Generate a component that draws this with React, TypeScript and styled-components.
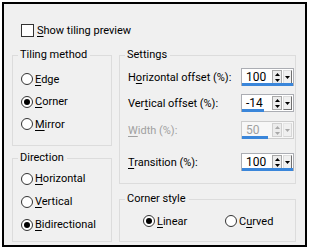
import React from "react";
import styled, { createGlobalStyle } from "styled-components";

const Global = createGlobalStyle`
  html, body { margin: 0; padding: 0; background: #ffffff; }
  body { font-family: Roboto, "Segoe UI", Tahoma, sans-serif; font-size: 11px; color: #000; }
`;

const Page = styled.div`
  width: 313px;
  height: 251px;
  background: #fff;
  padding: 2px 0 0 2px;
  box-sizing: border-box;
`;

const Frame = styled.div`
  width: 305px;
  height: 245px;
  box-sizing: border-box;
  border: 2px solid #000;
  background: #f0f0f0;
  padding: 20px 0 0 8px;
  display: flex;
  flex-direction: column;
`;

const CheckRow = styled.label`
  display: flex;
  align-items: center;
  height: 13px;
  padding-left: 9px;
  gap: 3px;
  line-height: 13px;
`;

const CheckBox = styled.span`
  width: 13px;
  height: 13px;
  box-sizing: border-box;
  border: 1px solid #333;
  background: #fff;
`;

const Columns = styled.div`
  display: flex;
  gap: 7px;
  margin-top: 11px;
`;

const Column = styled.div<{ $w: number }>`
  width: ${(p) => p.$w}px;
  flex: none;
  display: flex;
  flex-direction: column;
`;

const Group = styled.fieldset<{ $h: number; $mt?: number }>`
  margin: ${(p) => p.$mt ?? 0}px 0 0 0;
  padding: 0;
  border: 1px solid #dcdcdc;
  height: ${(p) => p.$h}px;
  box-sizing: border-box;
  min-width: 0;
  display: flex;
  flex-direction: column;
`;

const Legend = styled.legend`
  margin-left: 5px;
  padding: 0 3px 0 2px;
  line-height: 14px;
  height: 14px;
  white-space: nowrap;
`;

const RadioList = styled.div<{ $pt: number; $row: number }>`
  padding: ${(p) => p.$pt}px 0 0 8px;
  display: flex;
  flex-direction: column;
  & > * { height: ${(p) => p.$row}px; }
`;

const RadioRow = styled.label<{ $w?: number }>`
  display: flex;
  align-items: center;
  gap: 2px;
  white-space: nowrap;
  ${(p) => (p.$w ? `width: ${p.$w}px;` : "")}
`;

const Circle = styled.span<{ $on?: boolean }>`
  width: 12px;
  height: 12px;
  flex: none;
  box-sizing: border-box;
  border-radius: 50%;
  border: 1px solid #333;
  background: #fff;
  display: flex;
  align-items: center;
  justify-content: center;
  &::after {
    content: "";
    width: 6px;
    height: 6px;
    border-radius: 50%;
    background: ${(p) => (p.$on ? "#000" : "transparent")};
  }
`;

const U = styled.span`
  text-decoration: underline;
  text-underline-offset: 2px;
  text-decoration-thickness: 1px;
`;

const Rows = styled.div`
  display: flex;
  flex-direction: column;
  padding: 6px 0 0 8px;
`;

const FieldRow = styled.div<{ $mt: number; $disabled?: boolean }>`
  display: flex;
  align-items: center;
  justify-content: space-between;
  height: 18px;
  margin-top: ${(p) => p.$mt}px;
  padding-right: 1px;
  white-space: nowrap;
  color: ${(p) => (p.$disabled ? "#a0a0a0" : "#000")};
`;

const Spin = styled.div<{ $disabled?: boolean }>`
  position: relative;
  width: 53px;
  height: 18px;
  flex: none;
  box-sizing: border-box;
  border: 1px solid ${(p) => (p.$disabled ? "#cccccc" : "#abadb3")};
  background: ${(p) => (p.$disabled ? "#f7f7f7" : "#fff")};
  display: flex;
  align-items: stretch;
  color: ${(p) => (p.$disabled ? "#a0a0a0" : "#000")};
`;

const SpinText = styled.span`
  flex: 1;
  padding-left: 4px;
  line-height: 16px;
  font-size: 12px;
`;

const UpDown = styled.span<{ $disabled?: boolean }>`
  width: 10px;
  margin: 1px 1px 1px 0;
  box-sizing: border-box;
  border: 1px solid ${(p) => (p.$disabled ? "#d0d0d0" : "#a8a8a8")};
  background: #ececec;
  display: flex;
  flex-direction: column;
  align-items: center;
  justify-content: space-around;
`;

const Drop = styled.span<{ $disabled?: boolean }>`
  width: 9px;
  margin: 1px 1px 1px 0;
  box-sizing: border-box;
  border: 1px solid ${(p) => (p.$disabled ? "#d6d6d6" : "#707070")};
  border-top-color: ${(p) => (p.$disabled ? "#e5e5e5" : "#dcdcdc")};
  border-left-color: ${(p) => (p.$disabled ? "#e5e5e5" : "#dcdcdc")};
  background: #f0f0f0;
  display: flex;
  align-items: center;
  justify-content: center;
`;

const Bar = styled.span`
  position: absolute;
  left: 0;
  bottom: -1px;
  height: 3px;
  background: #3a86da;
`;

const Tri = ({ up, color }: { up?: boolean; color: string }) => (
  <svg width="5" height="3" viewBox="0 0 5 3">
    <path d={up ? "M2.5 0 L5 3 L0 3 Z" : "M0 0 L5 0 L2.5 3 Z"} fill={color} />
  </svg>
);

const SpinBox = ({ value, pct, disabled }: { value: string; pct: number; disabled?: boolean }) => {
  const c = disabled ? "#a8a8a8" : "#000";
  return (
    <Spin $disabled={disabled}>
      <SpinText>{value}</SpinText>
      <UpDown $disabled={disabled}>
        <Tri up color={c} />
        <Tri color={c} />
      </UpDown>
      <Drop $disabled={disabled}>
        <Tri color={c} />
      </Drop>
      <Bar style={{ width: `${pct}%` }} />
    </Spin>
  );
};

const CornerRow = styled.div`
  display: flex;
  align-items: center;
  padding: 6px 0 0 23px;
  height: 18px;
`;

export default function App() {
  return (
    <Page>
      <Global />
      <Frame>
        <CheckRow>
          <CheckBox />
          <span><U>S</U>how tiling preview</span>
        </CheckRow>
        <Columns>
          <Column $w={100}>
            <Group $h={98}>
              <Legend>Tiling method</Legend>
              <RadioList $pt={6} $row={22.5}>
                <RadioRow><Circle /><span><U>E</U>dge</span></RadioRow>
                <RadioRow><Circle $on /><span><U>C</U>orner</span></RadioRow>
                <RadioRow><Circle /><span><U>M</U>irror</span></RadioRow>
              </RadioList>
            </Group>
            <Group $h={91} $mt={5}>
              <Legend>Direction</Legend>
              <RadioList $pt={2} $row={23}>
                <RadioRow><Circle /><span><U>H</U>orizontal</span></RadioRow>
                <RadioRow><Circle /><span><U>V</U>ertical</span></RadioRow>
                <RadioRow><Circle $on /><span><U>B</U>idirectional</span></RadioRow>
              </RadioList>
            </Group>
          </Column>
          <Column $w={177}>
            <Group $h={136}>
              <Legend>Settings</Legend>
              <Rows>
                <FieldRow $mt={0}>
                  <span>H<U>o</U>rizontal offset (%):</span>
                  <SpinBox value="100" pct={100} />
                </FieldRow>
                <FieldRow $mt={8}>
                  <span>Ver<U>t</U>ical offset (%):</span>
                  <SpinBox value="-14" pct={43} />
                </FieldRow>
                <FieldRow $mt={9} $disabled>
                  <span><U>W</U>idth (%):</span>
                  <SpinBox value="50" pct={50} disabled />
                </FieldRow>
                <FieldRow $mt={14}>
                  <span><U>T</U>ransition (%):</span>
                  <SpinBox value="100" pct={100} />
                </FieldRow>
              </Rows>
            </Group>
            <Group $h={50} $mt={8}>
              <Legend>Corner style</Legend>
              <CornerRow>
                <RadioRow $w={82}><Circle $on /><span><U>L</U>inear</span></RadioRow>
                <RadioRow><Circle /><span>C<U>u</U>rved</span></RadioRow>
              </CornerRow>
            </Group>
          </Column>
        </Columns>
      </Frame>
    </Page>
  );
}
